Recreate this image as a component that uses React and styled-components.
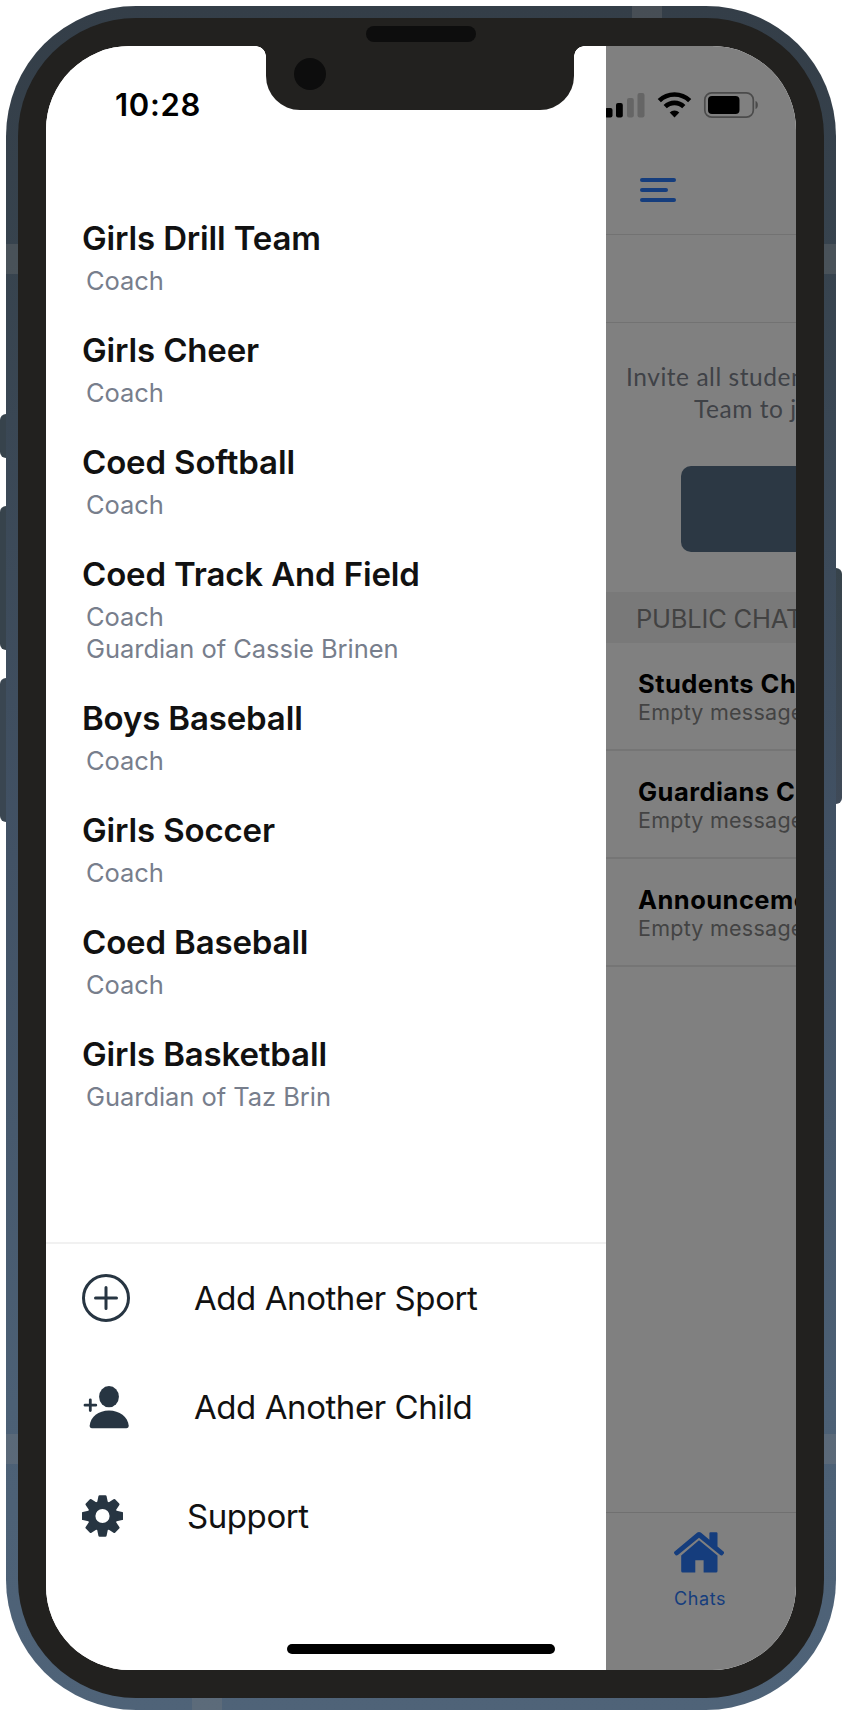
import styled, { createGlobalStyle } from "styled-components";

const GlobalStyle = createGlobalStyle`
  * {
    box-sizing: border-box;
  }

  body {
    margin: 0;
    background: #fff;
    font-family: Inter, "Liberation Sans", sans-serif;
  }

  svg {
    display: block;
    flex: none;
  }
`;

const Stage = styled.div`
  position: relative;
  width: 842px;
  height: 1716px;
  padding: 6px;
  overflow: hidden;
`;

const SideButton = styled.span`
  position: absolute;
  ${props => props.$side}: 0;
  top: ${props => props.$top}px;
  width: 12px;
  height: ${props => props.$height}px;
  border-radius: 6px;
  background: ${props => props.$color || "#37434c"};
`;

const Frame = styled.div`
  position: relative;
  width: 830px;
  height: 1704px;
  padding: 12px;
  border-radius: 130px;
  overflow: hidden;
  background: linear-gradient(#343e48 0%, #37434e 15%, #425265 50%, #4c6075 82%, #4f6378 100%);
`;

const Antenna = styled.span`
  position: absolute;
  left: ${props => props.$x}px;
  top: ${props => props.$y}px;
  width: ${props => (props.$flat ? 30 : 12)}px;
  height: ${props => (props.$flat ? 12 : 30)}px;
  background: rgba(140, 135, 132, 0.22);
`;

const Bezel = styled.div`
  position: relative;
  height: 100%;
  padding: 28px;
  border-radius: 118px;
  background: #22211f;
`;

const Screen = styled.div`
  display: flex;
  height: 100%;
  overflow: hidden;
  border-radius: 84px;
  background: #fff;
`;

const Notch = styled.div`
  position: absolute;
  top: 27px;
  left: 248px;
  width: 308px;
  height: 65px;
  border-radius: 0 0 34px 34px;
  background: #22211f;

  &::before,
  &::after {
    content: "";
    position: absolute;
    top: 1px;
    width: 10px;
    height: 10px;
  }

  &::before {
    left: -10px;
    background: radial-gradient(circle at 0 100%, transparent 9.5px, #22211f 10px);
  }

  &::after {
    right: -10px;
    background: radial-gradient(circle at 100% 100%, transparent 9.5px, #22211f 10px);
  }
`;

const Camera = styled.span`
  position: absolute;
  top: 40px;
  left: 276px;
  width: 32px;
  height: 32px;
  border-radius: 50%;
  background: #0d0d0d;
`;

const Speaker = styled.span`
  position: absolute;
  top: 8px;
  left: 348px;
  width: 110px;
  height: 16px;
  border-radius: 8px;
  background: #0d0d0d;
`;

const HomeIndicator = styled.span`
  position: absolute;
  bottom: 44px;
  left: 269px;
  width: 268px;
  height: 10px;
  border-radius: 5px;
  background: #000;
`;

const Drawer = styled.aside`
  display: flex;
  flex-direction: column;
  flex: none;
  width: 560px;
  background: #fff;
`;

const Clock = styled.div`
  padding: 41px 0 0 69px;
  height: 172px;
  font-size: 31px;
  font-weight: 600;
  line-height: 36px;
  letter-spacing: 0.7px;
  color: #000;
`;

const TeamList = styled.div`
  display: flex;
  flex-direction: column;
  gap: 33px;
  height: 1024px;
  padding-left: 36px;
`;

const TeamName = styled.div`
  margin-bottom: 7px;
  font-size: 33px;
  font-weight: 600;
  line-height: 40px;
  letter-spacing: -0.15px;
  color: #111;
  white-space: nowrap;
`;

const Role = styled.div`
  padding-left: 4px;
  font-size: 25.5px;
  line-height: 32px;
  letter-spacing: -0.05px;
  color: #777e8c;
  white-space: nowrap;
`;

const Actions = styled.nav`
  border-top: 2px solid #f1f1f1;
`;

const Action = styled.div`
  display: flex;
  align-items: center;
  height: 108.7px;
  padding-left: 36px;
  gap: 64px;
  font-size: 33px;
  letter-spacing: -0.43px;
  color: #111;
`;

const Page = styled.main`
  display: flex;
  flex-direction: column;
  flex: none;
  width: 190px;
  overflow: hidden;
  background: #808080;
  white-space: nowrap;
`;

const StatusBar = styled.div`
  display: flex;
  align-items: center;
  height: 118px;
  padding-bottom: 2px;
`;

const Header = styled.div`
  height: 71px;
  padding: 14px 34px;
  border-bottom: 1px solid #727272;
`;

const SubHeader = styled.div`
  height: 88px;
  border-bottom: 1px solid #727272;
`;

const Invite = styled.div`
  height: 269px;
  padding-top: 38px;
`;

const InviteLine = styled.div`
  padding-left: ${props => props.$indent}px;
  font-family: Lato, "Open Sans", sans-serif;
  font-size: 24.5px;
  line-height: 32px;
  letter-spacing: 0.55px;
  color: #3f4247;
`;

const InviteButton = styled.div`
  width: 200px;
  height: 86px;
  margin: 41px 0 0 75px;
  border-radius: 10px;
  background: #2c3844;
`;

const SectionTitle = styled.div`
  height: 51px;
  padding-left: 30px;
  font-size: 25.5px;
  line-height: 53px;
  letter-spacing: -0.2px;
  color: #424242;
  background: #797979;
`;

const ChatRow = styled.div`
  height: 108px;
  padding: 26px 0 0 32px;
  border-bottom: 2px solid #757575;
`;

const ChatName = styled.div`
  font-size: 25.5px;
  font-weight: 700;
  line-height: 30px;
  letter-spacing: 0.45px;
  color: #000;
`;

const ChatPreview = styled.div`
  font-size: 21.5px;
  line-height: 26px;
  letter-spacing: 0.25px;
  color: #434343;
`;

const TabBar = styled.div`
  display: flex;
  flex-direction: column;
  gap: 15px;
  height: 158px;
  margin-top: auto;
  padding: 19px 0 0 68px;
  border-top: 1px solid #707070;
  color: #153d7d;
  font-size: 18px;
  line-height: 22px;
  letter-spacing: 0.6px;
`;

const teams = [
  { name: "Girls Drill Team", roles: ["Coach"] },
  { name: "Girls Cheer", roles: ["Coach"] },
  { name: "Coed Softball", roles: ["Coach"] },
  { name: "Coed Track And Field", roles: ["Coach", "Guardian of Cassie Brinen"] },
  { name: "Boys Baseball", roles: ["Coach"] },
  { name: "Girls Soccer", roles: ["Coach"] },
  { name: "Coed Baseball", roles: ["Coach"] },
  { name: "Girls Basketball", roles: ["Guardian of Taz Brin"] },
];

const chats = ["Students Ch", "Guardians C", "Announceme"];

function PlusCircleIcon() {
  return (
    <svg width="48" height="48" viewBox="0 0 48 48" fill="none" stroke="#273542" strokeWidth="3" strokeLinecap="round">
      <circle cx="24" cy="24" r="22.5" />
      <path d="M13.5 24h21M24 13.5v21" />
    </svg>
  );
}

function AddPersonIcon() {
  return (
    <svg width="48" height="48" viewBox="0 0 48 48" fill="#273542">
      <ellipse cx="27" cy="13.7" rx="9.9" ry="10.6" />
      <path d="M7.7 42.5C8.4 34 16.5 27.5 27 27.5S45.9 34 46.7 42.5Q46.8 45.3 44.3 45.3H10Q7.5 45.3 7.7 42.5Z" />
      <path d="M3 22.2h10.8M8.3 16.8v10.8" stroke="#273542" strokeWidth="2.8" strokeLinecap="round" />
    </svg>
  );
}

function GearIcon() {
  return (
    <svg width="41" height="42" viewBox="-20.5 -21 41 42">
      <g fill="#273542">
        {[0, 45, 90, 135, 180, 225, 270, 315].map(angle => (
          <path key={angle} transform={`rotate(${angle})`} d="M-5.7 -12L-4.1 -19.7Q-3.9 -20.7 -2.9 -20.7H2.9Q3.9 -20.7 4.1 -19.7L5.7 -12Z" />
        ))}
      </g>
      <circle r="11" fill="none" stroke="#273542" strokeWidth="7.8" />
    </svg>
  );
}

function StatusIcons() {
  return (
    <svg width="190" height="30" viewBox="0 0 190 30">
      <rect x="-1" y="19" width="7.5" height="9.5" rx="2" />
      <rect x="10" y="14" width="6.8" height="14.5" rx="2" />
      <rect x="21" y="9" width="6.8" height="19.5" rx="2" fill="#656565" />
      <rect x="31.5" y="4" width="7" height="24.5" rx="2" fill="#656565" />
      <g fill="none" stroke="#000" strokeWidth="4.6">
        <path d="M53.3 11.7a21.8 21.8 0 0 1 30.4 0" />
        <path d="M59.2 17.7a13.2 13.2 0 0 1 18.6 0" />
      </g>
      <path d="M68.5 28.4l-4.8-4.8a6.8 6.8 0 0 1 9.6 0z" />
      <rect x="98.8" y="3.8" width="48.5" height="24.4" rx="7" fill="none" stroke="#4b4b4b" strokeWidth="1.7" />
      <rect x="102" y="7" width="31.5" height="18" rx="4" />
      <path d="M149.5 12c3.2 1 3.2 7 0 8z" fill="#4b4b4b" />
    </svg>
  );
}

function MenuIcon() {
  return (
    <svg width="36" height="24" viewBox="0 0 36 24" fill="#153d7d">
      <rect width="36" height="4" rx="2" />
      <rect y="10" width="28" height="4" rx="2" />
      <rect y="20" width="36" height="4" rx="2" />
    </svg>
  );
}

function HouseIcon() {
  return (
    <svg width="50" height="41" viewBox="0 0 50 41" fill="#153d7d">
      <path d="M25 8.3L43.5 23.5V39Q43.5 40.6 42 40.6H29.6V28.2H21.3V40.6H8.7Q7.2 40.6 7.2 39V23.5Z" />
      <path d="M23.3 .6Q25 -.6 26.8 .6L35.4 7.7V1.3Q35.4 .2 36.5 .2H42.3Q43.5 .2 43.5 1.3V14.5L49.5 19.5Q50.6 20.6 49.7 21.8L48.4 23.2Q47.3 24 46.2 23.1L25 5.7L3.9 23.1Q2.7 24 1.7 23.2L.4 21.8Q-.5 20.6 .6 19.5Z" />
    </svg>
  );
}

const actions = [
  { label: "Add Another Sport", icon: <PlusCircleIcon /> },
  { label: "Add Another Child", icon: <AddPersonIcon /> },
  { label: "Support", icon: <GearIcon /> },
];

function TeamDrawer() {
  return (
    <Drawer>
      <Clock>10:28</Clock>
      <TeamList>
        {teams.map(team => (
          <div key={team.name}>
            <TeamName>{team.name}</TeamName>
            {team.roles.map(role => (
              <Role key={role}>{role}</Role>
            ))}
          </div>
        ))}
      </TeamList>
      <Actions>
        {actions.map(action => (
          <Action key={action.label}>
            {action.icon}
            <span>{action.label}</span>
          </Action>
        ))}
      </Actions>
    </Drawer>
  );
}

function ChatsPage() {
  return (
    <Page>
      <StatusBar>
        <StatusIcons />
      </StatusBar>
      <Header>
        <MenuIcon />
      </Header>
      <SubHeader />
      <Invite>
        <InviteLine $indent={20}>Invite all studen</InviteLine>
        <InviteLine $indent={88}>Team to j</InviteLine>
        <InviteButton />
      </Invite>
      <SectionTitle>PUBLIC CHAT</SectionTitle>
      {chats.map(name => (
        <ChatRow key={name}>
          <ChatName>{name}</ChatName>
          <ChatPreview>Empty message</ChatPreview>
        </ChatRow>
      ))}
      <TabBar>
        <HouseIcon />
        <span>Chats</span>
      </TabBar>
    </Page>
  );
}

function App() {
  return (
    <Stage>
      <GlobalStyle />
      <SideButton $side="left" $top={414} $height={44} />
      <SideButton $side="left" $top={506} $height={144} />
      <SideButton $side="left" $top={678} $height={144} $color="#3a4651" />
      <SideButton $side="right" $top={568} $height={236} $color="linear-gradient(#37434b, #3f4a58)" />
      <Frame>
        <Antenna $x={0} $y={238} />
        <Antenna $x={818} $y={238} />
        <Antenna $x={0} $y={1428} />
        <Antenna $x={818} $y={1428} />
        <Antenna $x={626} $y={0} $flat />
        <Antenna $x={186} $y={1692} $flat />
        <Bezel>
          <Screen>
            <TeamDrawer />
            <ChatsPage />
          </Screen>
          <Notch />
          <Camera />
          <Speaker />
          <HomeIndicator />
        </Bezel>
      </Frame>
    </Stage>
  );
}

export default App;
